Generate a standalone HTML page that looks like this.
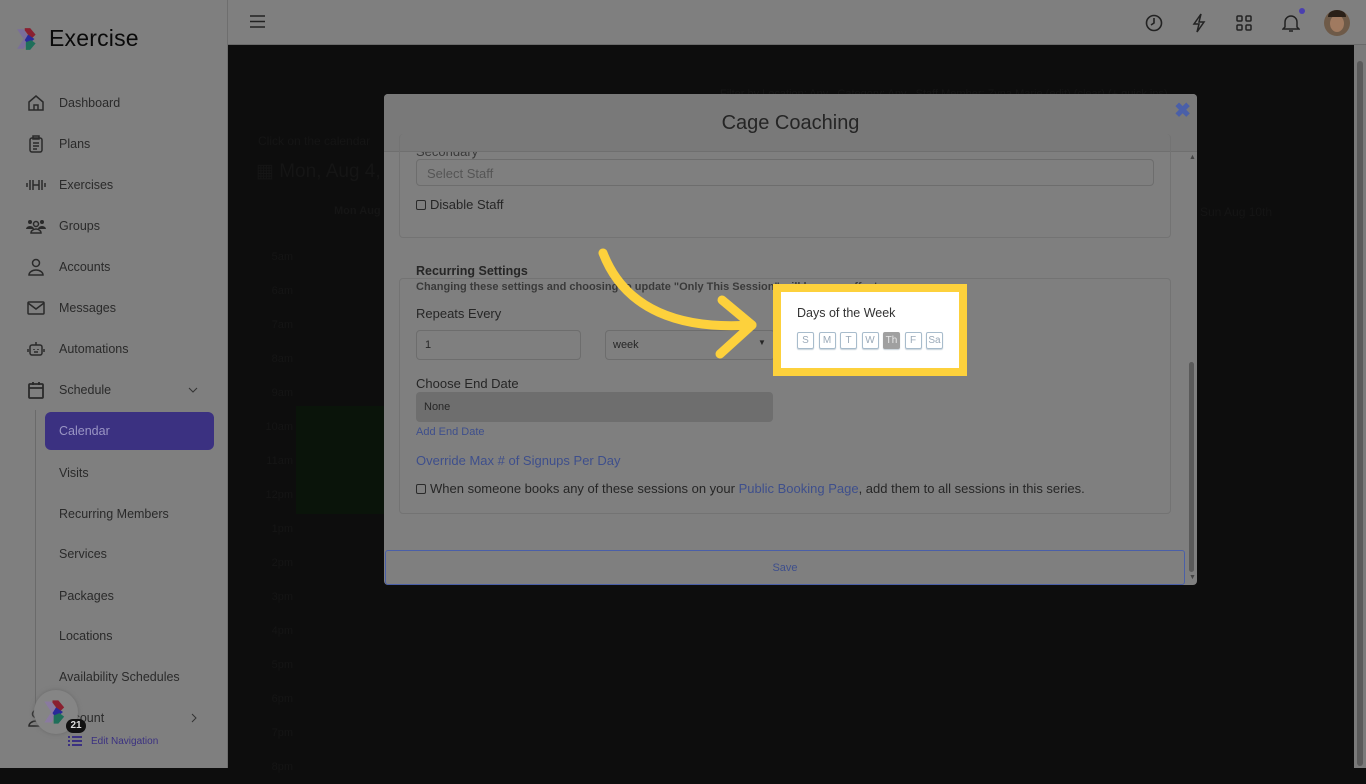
<!DOCTYPE html>
<html><head><meta charset="utf-8"><style>
*{box-sizing:border-box;margin:0;padding:0}
body{width:1366px;height:768px;overflow:hidden;background:#0d0d0d;font-family:"Liberation Sans",sans-serif;position:relative}
.sb{position:absolute;left:0;top:0;width:228px;height:768px;background:#7f7f7f;border-right:1px solid #6e6e6e}
.logo{position:absolute;left:15px;top:25px;display:flex;align-items:center}
.logo span{font-size:23px;color:#0a0a0a;margin-left:8px;letter-spacing:0.2px}
.nav{position:absolute;left:26px;font-size:12.5px;color:#2a2a2a;display:flex;align-items:center}
.nav svg{width:20px;height:20px;margin-right:13px}
.sub{position:absolute;left:59px;font-size:12.5px;color:#2a2a2a}
.cal{position:absolute;left:45px;top:412px;width:169px;height:38px;background:#3b3181;border-radius:6px;color:#9a95c4;font-size:12.5px;padding:12px 14px}
.vline{position:absolute;left:35px;top:410px;width:1px;height:310px;background:#6a6a6a}
.top{position:absolute;left:228px;top:0;width:1138px;height:45px;background:#7f7f7f;border-bottom:1px solid #6a6a6a}
.rs{position:absolute;left:1354px;top:45px;width:12px;height:723px;background:#7a7a7a}
.rs div{position:absolute;left:3px;top:16px;width:6px;height:705px;background:#5a5a5a;border-radius:3px}
.modal{position:absolute;left:384px;top:94px;width:813px;height:491px;background:#7f7f7f;border-radius:4px;overflow:hidden}
.mh{height:58px;background:#797979;border-bottom:1px solid #6f6f6f;text-align:center;font-size:20px;color:#252525;padding-top:18px}
.x{position:absolute;right:6px;top:4px;color:#4a5fa8;font-size:20px;font-weight:bold}
.panel{position:absolute;border:1px solid #737373;border-radius:4px}
.t{position:absolute;color:#262626;font-size:13px;white-space:nowrap}
.inp{position:absolute;border:1px solid #6d6d6d;border-radius:4px;background:#7f7f7f}
.lnk{color:#3e4f8c}
.cb{display:inline-block;width:10px;height:10px;border:1px solid #2a2a2a;border-radius:2px;vertical-align:-1px;margin-right:4px}
.msb{position:absolute;left:803px;top:60px;width:10px;height:430px}
.hl{position:absolute;left:773px;top:284px;width:194px;height:92px;border:8px solid #fdd13c;background:#fff}
.days{position:absolute;left:16px;top:40px;display:flex;gap:4.5px}
.days span{width:17px;height:17px;border:1px solid #a8bccc;border-radius:2px;font-size:10px;color:#9aa9b8;text-align:center;line-height:15px;box-shadow:0 1px 1px #c8d2da}
.days span.on{background:#a0a0a0;color:#e8e8e8;border-color:#a0a0a0}
.dk{position:absolute;color:#151515;font-size:11px}
</style></head><body>
<div class="sb">
 <div class="logo"><svg width="26" height="26" viewBox="0 0 24 24"><path d="M2 3h6l6 9-6 9H2l6-9z" fill="#7a6e9a"/><path d="M9 2h5l5 6-4 4-6-8z" fill="#8a2030"/><path d="M12 8l6 4-6 5-3-4z" fill="#2a2a9a"/><path d="M10 15l5-2 4 3-5 6h-4z" fill="#1f6f5a"/></svg><span>Exercise</span></div>
 <div class="nav" style="top:93px"><svg viewBox="0 0 20 20" fill="none" stroke="#2a2a2a" stroke-width="1.5"><path d="M3 9l7-6 7 6v8H3z M8 17v-5h4v5"/></svg>Dashboard</div>
 <div class="nav" style="top:134px"><svg viewBox="0 0 20 20" fill="none" stroke="#2a2a2a" stroke-width="1.5"><rect x="4" y="4" width="12" height="14" rx="2"/><rect x="7" y="2" width="6" height="3"/><path d="M7 9h6M7 12h6M7 15h4"/></svg>Plans</div>
 <div class="nav" style="top:175px"><svg viewBox="0 0 20 20" fill="none" stroke="#2a2a2a" stroke-width="1.5"><path d="M1 8v4M4 5v10M7 5v10M13 5v10M16 5v10M19 8v4M7 10h6"/></svg>Exercises</div>
 <div class="nav" style="top:216px"><svg viewBox="0 0 20 20" fill="#2a2a2a"><circle cx="4" cy="6" r="2"/><circle cx="16" cy="6" r="2"/><circle cx="10" cy="8" r="2.5" fill="none" stroke="#2a2a2a" stroke-width="1.5"/><path d="M0 13a4 3 0 018 0zM12 13a4 3 0 018 0z"/><path d="M5 17a5 4 0 0110 0z" fill="none" stroke="#2a2a2a" stroke-width="1.5"/></svg>Groups</div>
 <div class="nav" style="top:257px"><svg viewBox="0 0 20 20" fill="none" stroke="#2a2a2a" stroke-width="1.5"><circle cx="10" cy="6" r="3.5"/><path d="M3 18a7 5 0 0114 0z"/></svg>Accounts</div>
 <div class="nav" style="top:298px"><svg viewBox="0 0 20 20" fill="none" stroke="#2a2a2a" stroke-width="1.5"><rect x="2" y="4" width="16" height="12" rx="1"/><path d="M2 5l8 6 8-6"/></svg>Messages</div>
 <div class="nav" style="top:339px"><svg viewBox="0 0 20 20" fill="none" stroke="#2a2a2a" stroke-width="1.5"><rect x="4" y="6" width="12" height="10" rx="2"/><path d="M10 3v3M2 10v3M18 10v3M8 10v1M12 10v1M8 13h4"/></svg>Automations</div>
 <div class="nav" style="top:380px"><svg viewBox="0 0 20 20" fill="none" stroke="#2a2a2a" stroke-width="1.8"><rect x="3" y="4" width="14" height="14" rx="1"/><path d="M3 8h14M7 2v3M13 2v3"/></svg>Schedule</div>
 <svg style="position:absolute;left:188px;top:386px" width="10" height="8"><path d="M1 2l4 4 4-4" stroke="#333" fill="none"/></svg>
 <div class="vline"></div>
 <div class="cal">Calendar</div>
 <div class="sub" style="top:466px">Visits</div>
 <div class="sub" style="top:507px">Recurring Members</div>
 <div class="sub" style="top:547px">Services</div>
 <div class="sub" style="top:589px">Packages</div>
 <div class="sub" style="top:629px">Locations</div>
 <div class="sub" style="top:670px">Availability Schedules</div>
 <div class="nav" style="top:708px"><svg viewBox="0 0 20 20" fill="none" stroke="#2a2a2a" stroke-width="1.5"><circle cx="10" cy="6" r="3.5"/><path d="M3 18a7 5 0 0114 0z"/></svg>Account</div>
 <svg style="position:absolute;left:190px;top:713px" width="8" height="10"><path d="M2 1l4 4-4 4" stroke="#333" fill="none"/></svg>
 <div style="position:absolute;left:34px;top:690px;width:44px;height:44px;border-radius:50%;background:#858585;box-shadow:0 0 4px #6a6a6a"><svg style="position:absolute;left:8px;top:8px" width="28" height="28" viewBox="0 0 24 24"><path d="M2 3h6l6 9-6 9H2l6-9z" fill="#8a7aa0"/><path d="M9 2h5l5 6-4 4-6-8z" fill="#8a2030"/><path d="M12 8l6 4-6 5-3-4z" fill="#2a2a9a"/><path d="M10 15l5-2 4 3-5 6h-4z" fill="#1f6f5a"/></svg></div>
 <div style="position:absolute;left:66px;top:719px;width:20px;height:14px;border-radius:7px;background:#111;color:#ddd;font-size:10px;font-weight:bold;text-align:center;line-height:14px">21</div>
 <svg style="position:absolute;left:68px;top:735px" width="14" height="13"><g stroke="#3b3181" stroke-width="2"><path d="M0 2h2M4 2h10M0 6h2M4 6h10M0 10h2M4 10h10"/></g></svg>
 <div style="position:absolute;left:91px;top:736px;font-size:10px;color:#3b3181">Edit Navigation</div>
</div>
<div class="top">
 <svg style="position:absolute;left:22px;top:15px" width="15" height="13"><path d="M0 1h15M0 6.5h15M0 12h15" stroke="#222" stroke-width="1.6"/></svg>
 <svg style="position:absolute;left:917px;top:14px" width="18" height="18" viewBox="0 0 18 18" fill="none" stroke="#222" stroke-width="1.6"><circle cx="9" cy="9" r="7.5"/><path d="M9 4v5l-3 2"/></svg>
 <svg style="position:absolute;left:963px;top:13px" width="16" height="20" viewBox="0 0 16 20" fill="none" stroke="#222" stroke-width="1.5"><path d="M10 1L3 11h5l-2 8 7-10H8z"/></svg>
 <svg style="position:absolute;left:1008px;top:15px" width="16" height="16" fill="none" stroke="#222" stroke-width="1.5"><rect x="1" y="1" width="5" height="5" rx="1"/><rect x="10" y="1" width="5" height="5" rx="1"/><rect x="1" y="10" width="5" height="5" rx="1"/><rect x="10" y="10" width="5" height="5" rx="1"/></svg>
 <svg style="position:absolute;left:1054px;top:13px" width="18" height="20" viewBox="0 0 18 20" fill="none" stroke="#222" stroke-width="1.5"><path d="M3 14V9a6 6 0 0112 0v5l2 2H1z M7 18h4"/></svg>
 <div style="position:absolute;left:1071px;top:8px;width:6px;height:6px;border-radius:50%;background:#4a3fb0"></div>
 <div style="position:absolute;left:1096px;top:10px;width:26px;height:26px;border-radius:50%;background:#6e5a48;overflow:hidden"><div style="position:absolute;left:6px;top:5px;width:14px;height:17px;border-radius:50%;background:#a07a60"></div><div style="position:absolute;left:4px;top:0;width:18px;height:7px;border-radius:8px 8px 0 0;background:#2a2018"></div></div>
</div>
<div class="rs"><div></div></div>
<div class="dk" style="left:258px;top:134px;font-size:12px">Click on the calendar</div>
<div class="dk" style="left:256px;top:160px;font-size:19px">&#9638; Mon, Aug 4, 2</div>
<div class="dk" style="left:334px;top:205px;font-weight:bold">Mon Aug</div>
<div class="dk" style="left:1200px;top:205px;font-size:12px">Sun Aug 10th</div>
<div class="dk" style="left:720px;top:88px">Filter by Location: Any &nbsp; Category: Any &nbsp; Staff Member: Zyna Marie (edit) (clear) (+ quick ins)</div>
<div style="position:absolute;left:296px;top:406px;width:90px;height:108px;background:#0a140a"></div>
<div class="dk" style="left:265px;top:240px;line-height:34px;text-align:right;width:28px">5am<br>6am<br>7am<br>8am<br>9am<br>10am<br>11am<br>12pm<br>1pm<br>2pm<br>3pm<br>4pm<br>5pm<br>6pm<br>7pm<br>8pm</div>
<div class="modal">
 <div class="mh">Cage Coaching</div>
 <div class="x">&#10006;</div>
 <div class="t" style="left:32px;top:50px;font-size:13px;color:#3a3a3a;clip-path:inset(8px 0 0 0)">Secondary</div>
 <div class="panel" style="left:15px;top:40px;width:772px;height:104px;border-top:none"></div>
 <div class="inp" style="left:32px;top:65px;width:738px;height:27px"></div>
 <div class="t" style="left:43px;top:72px;color:#555">Select Staff</div>
 <div class="t" style="left:32px;top:103px"><span class="cb"></span>Disable Staff</div>
 <div class="panel" style="left:15px;top:184px;width:772px;height:236px"></div>
 <div class="t" style="left:32px;top:170px;font-weight:bold;font-size:12.5px">Recurring Settings</div>
 <div class="t" style="left:32px;top:187px;font-weight:bold;font-size:11px;color:#3a3a3a">Changing these settings and choosing to update "Only This Session" will have no effect.</div>
 <div class="t" style="left:32px;top:212px">Repeats Every</div>
 <div class="inp" style="left:32px;top:236px;width:165px;height:30px"></div>
 <div class="t" style="left:41px;top:245px;font-size:11px">1</div>
 <div class="inp" style="left:221px;top:236px;width:170px;height:30px"></div>
 <div class="t" style="left:229px;top:245px;font-size:11px">week</div>
 <div class="t" style="left:374px;top:244px;font-size:8px">&#9660;</div>
 <div class="t" style="left:32px;top:282px">Choose End Date</div>
 <div style="position:absolute;left:32px;top:298px;width:357px;height:30px;background:#6e6e6e;border-radius:4px"></div>
 <div class="t" style="left:40px;top:307px;font-size:11px">None</div>
 <div class="t lnk" style="left:32px;top:332px;font-size:11px">Add End Date</div>
 <div class="t lnk" style="left:32px;top:359px">Override Max # of Signups Per Day</div>
 <div class="t" style="left:32px;top:387px"><span class="cb"></span>When someone books any of these sessions on your <span class="lnk">Public Booking Page</span>, add them to all sessions in this series.</div>
 <div style="position:absolute;left:1px;top:456px;width:800px;height:35px;border:1px solid #4a5fa8;border-radius:3px;text-align:center;font-size:11px;color:#3e4f8c;padding-top:11px">Save</div>
 <div class="msb"><div style="position:absolute;left:2px;top:0;font-size:7px;color:#444">&#9650;</div><div style="position:absolute;left:2px;top:208px;width:5px;height:210px;background:#5a5a5a;border-radius:3px"></div><div style="position:absolute;left:2px;top:420px;font-size:7px;color:#444">&#9660;</div></div>
</div>
<svg style="position:absolute;left:0;top:0" width="1366" height="768"><g fill="none" stroke="#fdd13c" stroke-width="9" stroke-linecap="round" stroke-linejoin="round"><path d="M603 253 C625 310 680 330 752 325"/><path d="M722 300 L752 325 L720 354"/></g></svg>
<div class="hl">
 <div style="position:absolute;left:16px;top:14px;font-size:12.5px;color:#333">Days of the Week</div>
 <div class="days"><span>S</span><span>M</span><span>T</span><span>W</span><span class="on">Th</span><span>F</span><span>Sa</span></div>
</div>
</body></html>
